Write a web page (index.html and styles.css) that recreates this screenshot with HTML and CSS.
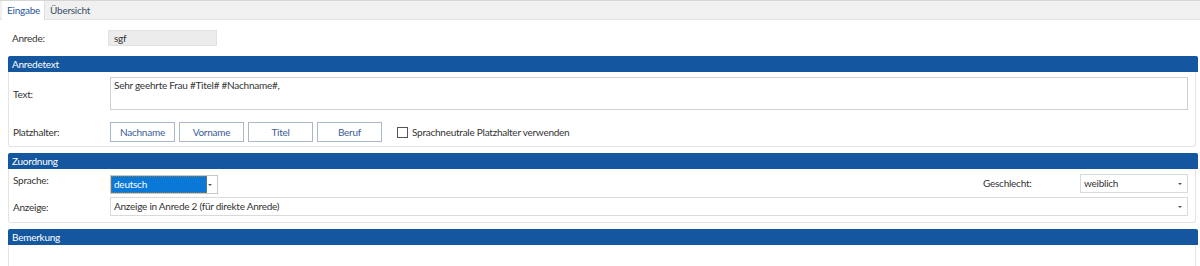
FILE: index.html
```html
<!DOCTYPE html>
<html lang="de">
<head>
  <meta charset="UTF-8" />
  <title>Anrede</title>
  <link rel="stylesheet" href="styles.css">
</head>
<body>
  <div class="tabs">
    <div class="tab active">Eingabe</div>
    <div class="tab">Übersicht</div>
  </div>

  <main class="page">
    <div class="top-row">
      <label class="label">Anrede:</label>
      <div class="readonly">sgf</div>
    </div>

    <section class="group">
      <div class="group-head">Anredetext</div>
      <div class="group-body">
        <div class="row row-text">
          <label class="label">Text:</label>
          <div class="textarea">Sehr geehrte Frau #Titel# #Nachname#,</div>
        </div>
        <div class="row row-holders">
          <label class="label">Platzhalter:</label>
          <div class="holders">
            <button class="holder">Nachname</button>
            <button class="holder">Vorname</button>
            <button class="holder">Titel</button>
            <button class="holder">Beruf</button>
            <span class="check"><span class="box"></span>Sprachneutrale Platzhalter verwenden</span>
          </div>
        </div>
      </div>
    </section>

    <section class="group">
      <div class="group-head">Zuordnung</div>
      <div class="group-body assign">
        <div class="row-lang">
          <label class="label">Sprache:</label>
          <div class="select select-lang focused">deutsch<span class="arrow"></span></div>
          <label class="label label-right">Geschlecht:</label>
          <div class="select select-sex">weiblich<span class="arrow"></span></div>
        </div>
        <div class="row">
          <label class="label">Anzeige:</label>
          <div class="select select-wide">Anzeige in Anrede 2 (für direkte Anrede)<span class="arrow"></span></div>
        </div>
      </div>
    </section>

    <section class="group">
      <div class="group-head">Bemerkung</div>
      <div class="group-body notes"></div>
    </section>
  </main>
</body>
</html>
```

FILE: styles.css
```css
html, body {
  margin: 0;
  height: 100%;
  overflow: hidden;
  background-color: #fff;
  font-family: Lato, "Open Sans", sans-serif;
  font-size: 10px;
  letter-spacing: -0.25px;
  color: #222;
}

/* Tab strip */
.tabs {
  display: flex;
  height: 18px;
  background-color: #f0f0f0;
  border-top: 1px solid #d6d6d6;
  border-bottom: 1px solid #e2e2e2;
  padding-left: 2px;
}

.tab {
  padding: 0 4px 0 5px;
  line-height: 18px;
  color: #3b4f66;
}

.tab.active {
  background-color: #fff;
  color: #1f5a9c;
  height: 19px;
  border-right: 1px solid #dcdcdc;
}

.page {
  padding: 0 2px 0 8px;
}

.label {
  display: block;
  width: 97px;
  flex-shrink: 0;
  padding-left: 4px;
  color: #333;
}

/* Anrede */
.top-row {
  display: flex;
  align-items: center;
  height: 15px;
  margin-top: 10px;
  margin-bottom: 11px;
}

.readonly {
  width: 102px;
  height: 14px;
  line-height: 14px;
  padding-left: 5px;
  margin-left: -1px;
  background-color: #ececec;
  border: 1px solid #e2e2e2;
  color: #333;
}

/* Groups */
.group {
  margin-bottom: 6px;
}

.group-head {
  height: 16px;
  line-height: 16px;
  padding-left: 4px;
  background-color: #14579f;
  color: #fff;
  border-radius: 2px 2px 0 0;
}

.group-body {
  border: 1px solid #e4e4e4;
  border-top: none;
  border-radius: 0 0 3px 3px;
  margin-right: 2px;
  padding: 5px 7px 4px 0;
}

.row {
  display: flex;
  align-items: center;
}

.row-text {
  height: 33px;
}

.textarea {
  flex: 1;
  border: 1px solid #cfcfcf;
  padding: 1px 3px;
  box-sizing: border-box;
  height: 33px;
  color: #333;
}

.row-holders {
  margin-top: 12px;
  height: 20px;
}

.holders {
  display: flex;
  align-items: center;
  gap: 4px;
}

.holder {
  width: 65px;
  height: 20px;
  padding: 0;
  margin: 0;
  background-color: #fff;
  border: 1px solid #a9b9cc;
  font-family: inherit;
  font-size: 10px;
  letter-spacing: inherit;
  color: #3a5c98;
}

.check {
  display: flex;
  align-items: center;
  margin-left: 11px;
  color: #333;
}

.box {
  width: 9px;
  height: 9px;
  border: 1px solid #555;
  margin-right: 4px;
}

/* Zuordnung */
.assign {
  padding-bottom: 6px;
}

.row-lang {
  display: grid;
  grid-template-columns: 101px 108px 1fr 101px 108px;
  align-items: start;
  height: 19px;
  margin-bottom: 4px;
}

.row-lang .label {
  width: auto;
}

.select {
  position: relative;
  height: 19px;
  line-height: 17px;
  box-sizing: border-box;
  border: 1px solid #dadada;
  padding-left: 3px;
  color: #333;
}

.arrow {
  position: absolute;
  right: 5px;
  top: 8px;
  border-left: 2px solid transparent;
  border-right: 2px solid transparent;
  border-top: 2px solid #555;
}

.select-lang {
  margin-top: 1px;
}

.select-lang.focused {
  background: linear-gradient(to right, #0a78d7 96px, #fff 96px);
  color: #fff;
  border-color: #c8c8c8;
}

.select-lang.focused::after {
  content: "";
  position: absolute;
  left: 0;
  top: 0;
  width: 96px;
  height: 17px;
  border: 1px dotted #a07a3a;
  box-sizing: border-box;
}

.label-right {
  grid-column: 4;
  padding-top: 3px;
}

.select-wide {
  flex: 1;
}

.notes {
  height: 20px;
}
```
